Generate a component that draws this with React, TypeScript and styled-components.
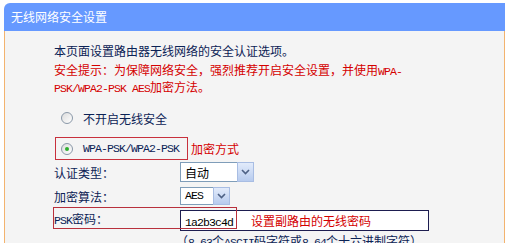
import { createGlobalStyle, styled } from 'styled-components';

const GlobalStyle = createGlobalStyle`
    html, body {
        margin: 0;
        background: #ffffff;
    }
    body {
        font-family: "Noto Sans CJK SC", "Liberation Sans", sans-serif;
        font-size: 12px;
        overflow: hidden;
    }
`;

const StyledPage = styled.div`
    padding: 3px 5px 0 4px;
    height: 240px;
    overflow: hidden;
`;

const Header = styled.div`
    height: 28px;
    padding-left: 7px;

    background: #6699ff;
    border-radius: 6px 0 0 0;

    color: #ffffff;
    font-size: 12px;
    line-height: 28px;
`;

const Body = styled.div`
    height: 260px;
    padding: 11px 0 0 49px;

    background: #f4f4f4;
    border-left: 1px solid #f3b36e;
    border-right: 1px solid #f3b36e;

    display: flex;
    flex-direction: column;
`;

const Intro = styled.div`
    color: #0b2255;
    line-height: 18px;
`;

const Tip = styled.div`
    margin-top: 1px;

    color: #d40000;
    line-height: 17px;
`;

const Latin = styled.span`
    font-family: "Liberation Mono", monospace;
    font-size: 11.5px;
    line-height: 1;
    letter-spacing: -0.9px;
`;

const RadioRow = styled.div<{ $top: number }>`
    margin-top: ${({ $top }) => $top}px;
    height: 24px;
    padding-left: 7px;

    display: flex;
    align-items: center;
    gap: 10px;

    color: #0b2255;
`;

const Radio = styled.span<{ $checked?: boolean }>`
    position: relative;
    width: 10px;
    height: 10px;

    border: 1px solid #8a98a8;
    border-radius: 50%;
    background: linear-gradient(135deg, #dcdcdc, #ffffff);

    &::after {
        content: '';
        display: ${({ $checked }) => ($checked ? 'block' : 'none')};
        position: absolute;
        left: 3px;
        top: 3px;
        width: 4px;
        height: 4px;

        border-radius: 50%;
        background: #2fae2f;
    }
`;

const ModeRow = styled.div`
    margin-top: 7px;

    display: flex;
    align-items: center;
    gap: 3px;
`;

const ModeBox = styled.div`
    margin-left: 1px;
    width: 126px;
    height: 21px;
    padding-left: 5px;

    display: flex;
    align-items: center;
    gap: 10px;

    border: 1px solid #c8303c;
    color: #0b2255;
`;

const Note = styled.span`
    color: #d40000;
`;

const FieldRow = styled.div<{ $top: number; $height: number }>`
    position: relative;
    margin-top: ${({ $top }) => $top}px;
    height: ${({ $height }) => $height}px;

    display: flex;
    align-items: center;
`;

const Label = styled.span`
    width: 126px;

    color: #0b2255;
`;

const Select = styled.div<{ $width: number; $height: number }>`
    height: ${({ $height }) => $height}px;

    display: flex;

    > .value {
        width: ${({ $width }) => $width}px;
        padding-left: 4px;

        display: flex;
        align-items: center;

        background: #ffffff;
        border: 1px solid #7f9db9;
        border-right: none;
        color: #000000;
    }

    > .button {
        width: 15px;

        display: flex;
        align-items: center;
        justify-content: center;

        background: linear-gradient(180deg, #e2ebfb, #b7cbee);
        border: 1px solid #a8bde3;
    }
`;

const Input = styled.div`
    width: 247px;
    height: 19px;
    margin-top: 3px;

    display: flex;
    align-items: center;

    border: 1px solid #1d1d50;
    background: #ffffff;

    > .value {
        width: 66px;
        padding-left: 4px;
        color: #000000;
    }
`;

const Marker = styled.div`
    position: absolute;
    left: -1px;
    top: 0;
    width: 182px;
    height: 20px;

    border: 1px solid #b8303c;
    pointer-events: none;
`;

const Hint = styled.div`
    margin-top: 2px;
    padding-left: 122px;

    color: #0b2255;
    line-height: 17px;
    white-space: nowrap;
`;

function Chevron() {
    return (
        <svg width="9" height="6" viewBox="0 0 9 6">
            <path d="M1 1 L4.5 4.5 L8 1" fill="none" stroke="#4d6185" strokeWidth="1.6" />
        </svg>
    );
}

export default function App() {
    return (
        <StyledPage>
            <GlobalStyle />
            <Header>无线网络安全设置</Header>

            <Body>
                <Intro>本页面设置路由器无线网络的安全认证选项。</Intro>

                <Tip>
                    安全提示：为保障网络安全，强烈推荐开启安全设置，并使用<Latin>WPA-</Latin>
                    <br />
                    <Latin>PSK/WPA2-PSK AES</Latin>加密方法。
                </Tip>

                <RadioRow $top={11}>
                    <Radio />
                    不开启无线安全
                </RadioRow>

                <ModeRow>
                    <ModeBox>
                        <Radio $checked />
                        <Latin>WPA-PSK/WPA2-PSK</Latin>
                    </ModeBox>
                    <Note>加密方式</Note>
                </ModeRow>

                <FieldRow $top={1} $height={22}>
                    <Label>认证类型：</Label>
                    <Select $width={52} $height={20}>
                        <span className="value">自动</span>
                        <span className="button"><Chevron /></span>
                    </Select>
                </FieldRow>

                <FieldRow $top={2} $height={22}>
                    <Label>加密算法：</Label>
                    <Select $width={28} $height={18}>
                        <span className="value"><Latin>AES</Latin></span>
                        <span className="button"><Chevron /></span>
                    </Select>
                </FieldRow>

                <FieldRow $top={0} $height={23}>
                    <Label><Latin>PSK</Latin>密码：</Label>
                    <Input>
                        <span className="value"><Latin>1a2b3c4d</Latin></span>
                        <Note>设置副路由的无线密码</Note>
                    </Input>
                    <Marker />
                </FieldRow>

                <Hint>（<Latin>8-63</Latin>个<Latin>ASCII</Latin>码字符或<Latin>8-64</Latin>个十六进制字符）</Hint>
            </Body>
        </StyledPage>
    );
}
